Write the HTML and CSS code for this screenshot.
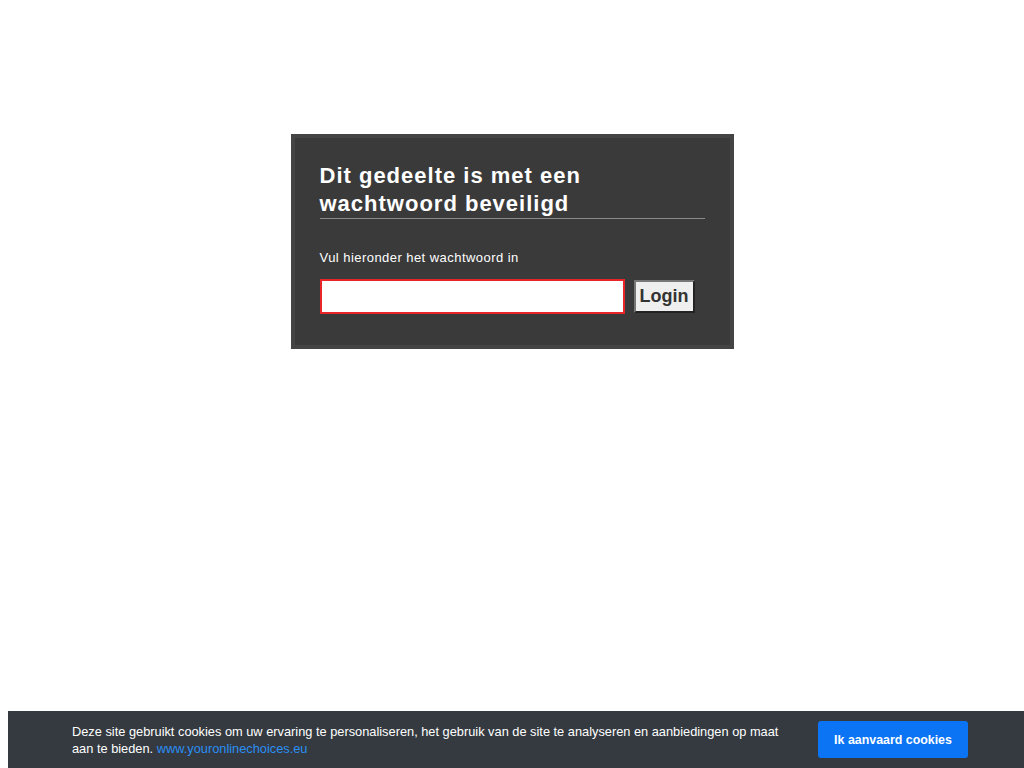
FILE: index.html
```html
<!DOCTYPE html>
<html lang="nl">
<head>
    <meta charset="UTF-8">
    <meta name="viewport" content="width=device-width, initial-scale=1.0">
    <title>Beveiligd gedeelte</title>
    <link rel="stylesheet" href="styles.css">
</head>
<body>
    <!-- Password Box -->
    <div class="protect-box">
        <h1>Dit gedeelte is met een wachtwoord beveiligd</h1>
        <p class="protect-label">Vul hieronder het wachtwoord in</p>
        <form class="protect-form" onsubmit="return false;">
            <input type="password" class="protect-input" name="password">
            <button type="submit" class="protect-button">Login</button>
        </form>
    </div>

    <!-- Cookie Bar -->
    <div class="cookie-bar">
        <p class="cookie-text">Deze site gebruikt cookies om uw ervaring te personaliseren, het gebruik van de site te analyseren en aanbiedingen op maat aan te bieden. <a href="#">www.youronlinechoices.eu</a></p>
        <button class="cookie-button">Ik aanvaard cookies</button>
    </div>
</body>
</html>
```

FILE: styles.css
```css
/* General Styles */
body {
    margin: 8px;
    font-family: "Liberation Sans", Arial, sans-serif;
    background-color: #fff;
}

/* Password Box */
.protect-box {
    width: 385px;
    margin: 126px auto 0;
    padding: 24px 25px 31px;
    background-color: #3a3a3a;
    border: 4px solid #444;
    color: #fff;
}

.protect-box h1 {
    margin: 0;
    font-size: 22px;
    line-height: 28px;
    font-weight: bold;
    letter-spacing: 1px;
    border-bottom: 1px solid #8c8c8c;
}

.protect-label {
    margin: 31px 0 14px;
    font-size: 13px;
    line-height: 15px;
    letter-spacing: 0.45px;
}

.protect-form {
    display: flex;
    align-items: center;
    gap: 9px;
    margin: 0;
}

.protect-input {
    width: 305px;
    height: 35px;
    box-sizing: border-box;
    border: 2px solid #e8262a;
    background-color: #fff;
    padding: 0 6px;
    outline: none;
}

.protect-button {
    width: 61px;
    height: 33px;
    box-sizing: border-box;
    padding: 0;
    background-color: #efefef;
    border: 2px solid;
    border-color: #777 #222 #222 #777;
    color: #333;
    font-family: "Liberation Sans", Arial, sans-serif;
    font-size: 18px;
    font-weight: bold;
    cursor: pointer;
}

/* Cookie Bar */
.cookie-bar {
    position: fixed;
    left: 8px;
    right: 0;
    bottom: 0;
    height: 57px;
    box-sizing: border-box;
    display: flex;
    align-items: center;
    padding: 0 56px 0 64px;
    background-color: #343a40;
}

.cookie-text {
    width: 730px;
    margin: 0 16px 0 0;
    color: #fff;
    font-size: 12.8px;
    line-height: 17px;
}

.cookie-text a {
    color: #2b8ff5;
    text-decoration: none;
}

.cookie-button {
    width: 150px;
    height: 37px;
    border: none;
    border-radius: 3px;
    background-color: #0a74f5;
    color: #fff;
    font-family: "Liberation Sans", Arial, sans-serif;
    font-size: 12.4px;
    font-weight: bold;
    cursor: pointer;
}
```
